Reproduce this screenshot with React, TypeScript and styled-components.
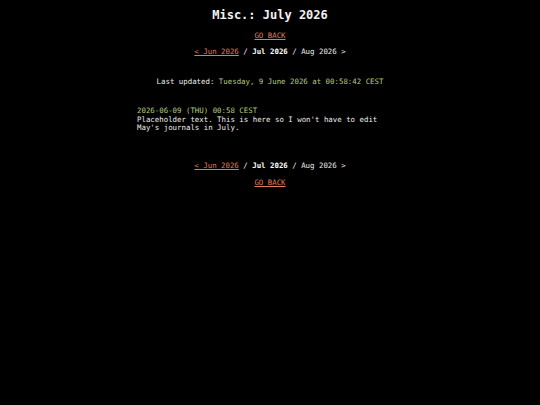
import React from "react";
import styled, { createGlobalStyle } from "styled-components";

const Global = createGlobalStyle`
  html, body { margin: 0; padding: 0; background: #000; }
  body {
    color: #ececec;
    font-family: "DejaVu Sans Mono", "Liberation Mono", monospace;
    font-size: 7.4px;
    line-height: 8.5px;
  }
`;

const Page = styled.div`
  display: flex;
  flex-direction: column;
  align-items: center;
  padding-top: 8px;
`;

const Title = styled.h1`
  margin: 0;
  font-size: 12px;
  line-height: 15px;
  font-weight: bold;
  color: #f2f2f2;
`;

const Line = styled.p<{ $top: number }>`
  margin: ${(p) => p.$top}px 0 0;
  text-align: center;
`;

const Link = styled.a`
  color: #e07a58;
  text-decoration: underline;
  text-underline-offset: 1px;
`;

const Current = styled.b`
  font-weight: bold;
  color: #fff;
`;

const Stamp = styled.span`
  color: #b0cc82;
`;

const Entry = styled.div<{ $top: number }>`
  margin-top: ${(p) => p.$top}px;
  width: 266px;
`;

const EntryText = styled.p`
  margin: 0;
  white-space: pre-wrap;
`;

const Nav = ({ top }: { top: number }) => (
  <Line $top={top}>
    <Link href="#">&lt; Jun 2026</Link> / <Current>Jul 2026</Current> / Aug 2026 &gt;
  </Line>
);

export default function App() {
  return (
    <>
      <Global />
      <Page>
        <Title>Misc.: July 2026</Title>
        <Line $top={9}>
          <Link href="#">GO BACK</Link>
        </Line>
        <Nav top={7.5} />
        <Line $top={21.5}>
          Last updated: <Stamp>Tuesday, 9 June 2026 at 00:58:42 CEST</Stamp>
        </Line>
        <Entry $top={20.5}>
          <Stamp>2026-06-09 (THU) 00:58 CEST</Stamp>
          <EntryText>
            Placeholder text. This is here so I won't have to edit May's journals in July.
          </EntryText>
        </Entry>
        <Nav top={29.5} />
        <Line $top={8.5}>
          <Link href="#">GO BACK</Link>
        </Line>
      </Page>
    </>
  );
}
